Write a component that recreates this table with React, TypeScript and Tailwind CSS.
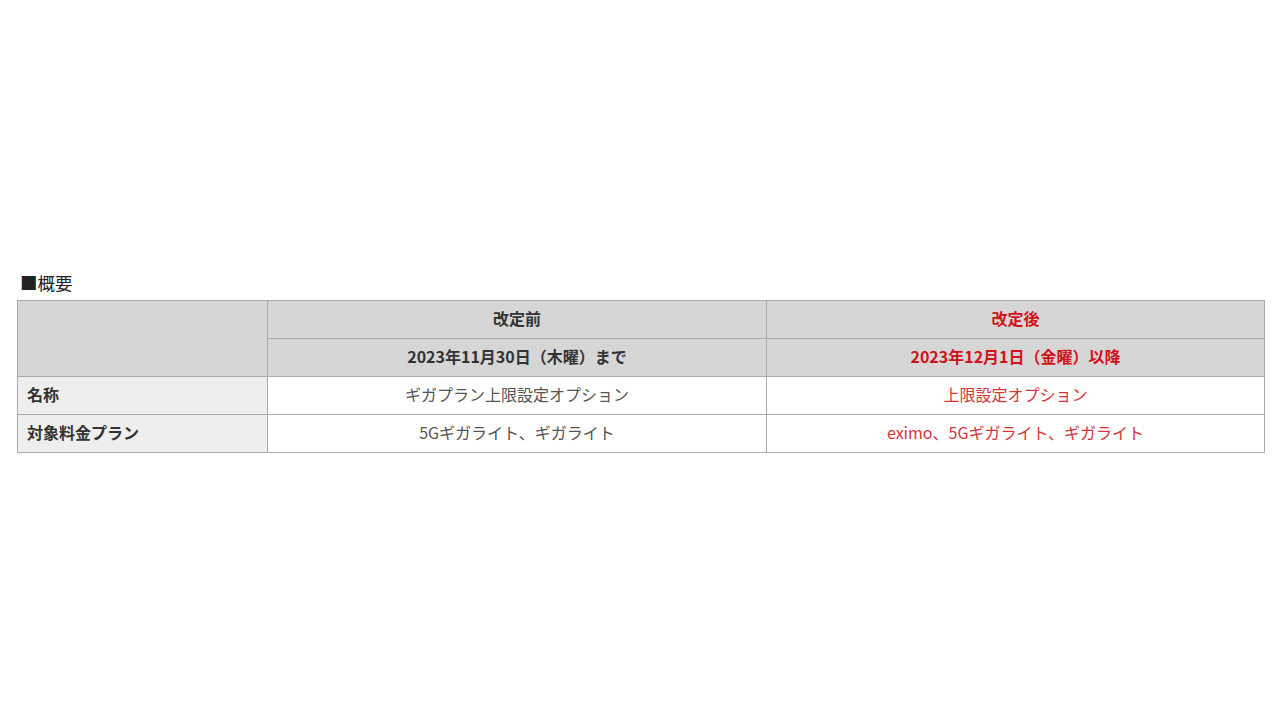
const rows = [
  { label: "名称", before: "ギガプラン上限設定オプション", after: "上限設定オプション" },
  { label: "対象料金プラン", before: "5Gギガライト、ギガライト", after: "eximo、5Gギガライト、ギガライト" },
];

const cell = "border border-[#aaa] pb-[3px]";

export default function App() {
  return (
    <div className="min-h-[720px] w-[1280px] bg-white font-['Noto_Sans_CJK_JP',sans-serif] text-[#333]">
      <div className="px-[17px] pt-[271px]">
        <p className="mb-[5px] pl-[3px] text-[17.5px] leading-[24px] text-[#222]">■概要</p>
        <table className="w-[1247px] table-fixed border-collapse border border-[#aaa] text-[16px] leading-[22px]">
          <colgroup>
            <col className="w-[250px]" />
            <col className="w-[499px]" />
            <col className="w-[498px]" />
          </colgroup>
          <thead>
            <tr className="h-[38px] bg-[#d6d6d6]">
              <th rowSpan={2} className={cell}></th>
              <th className={`${cell} font-bold text-[#333]`}>改定前</th>
              <th className={`${cell} font-bold text-[#d0121b]`}>改定後</th>
            </tr>
            <tr className="h-[38px] bg-[#d6d6d6]">
              <th className={`${cell} font-bold text-[#333]`}>2023年11月30日（木曜）まで</th>
              <th className={`${cell} font-bold text-[#d0121b]`}>2023年12月1日（金曜）以降</th>
            </tr>
          </thead>
          <tbody>
            {rows.map((r) => (
              <tr key={r.label} className="h-[38px]">
                <td className={`${cell} bg-[#eeeeee] px-[9px] font-bold text-[#333]`}>{r.label}</td>
                <td className={`${cell} text-center text-[#555]`}>{r.before}</td>
                <td className={`${cell} text-center text-[#d6343a]`}>{r.after}</td>
              </tr>
            ))}
          </tbody>
        </table>
      </div>
    </div>
  );
}
